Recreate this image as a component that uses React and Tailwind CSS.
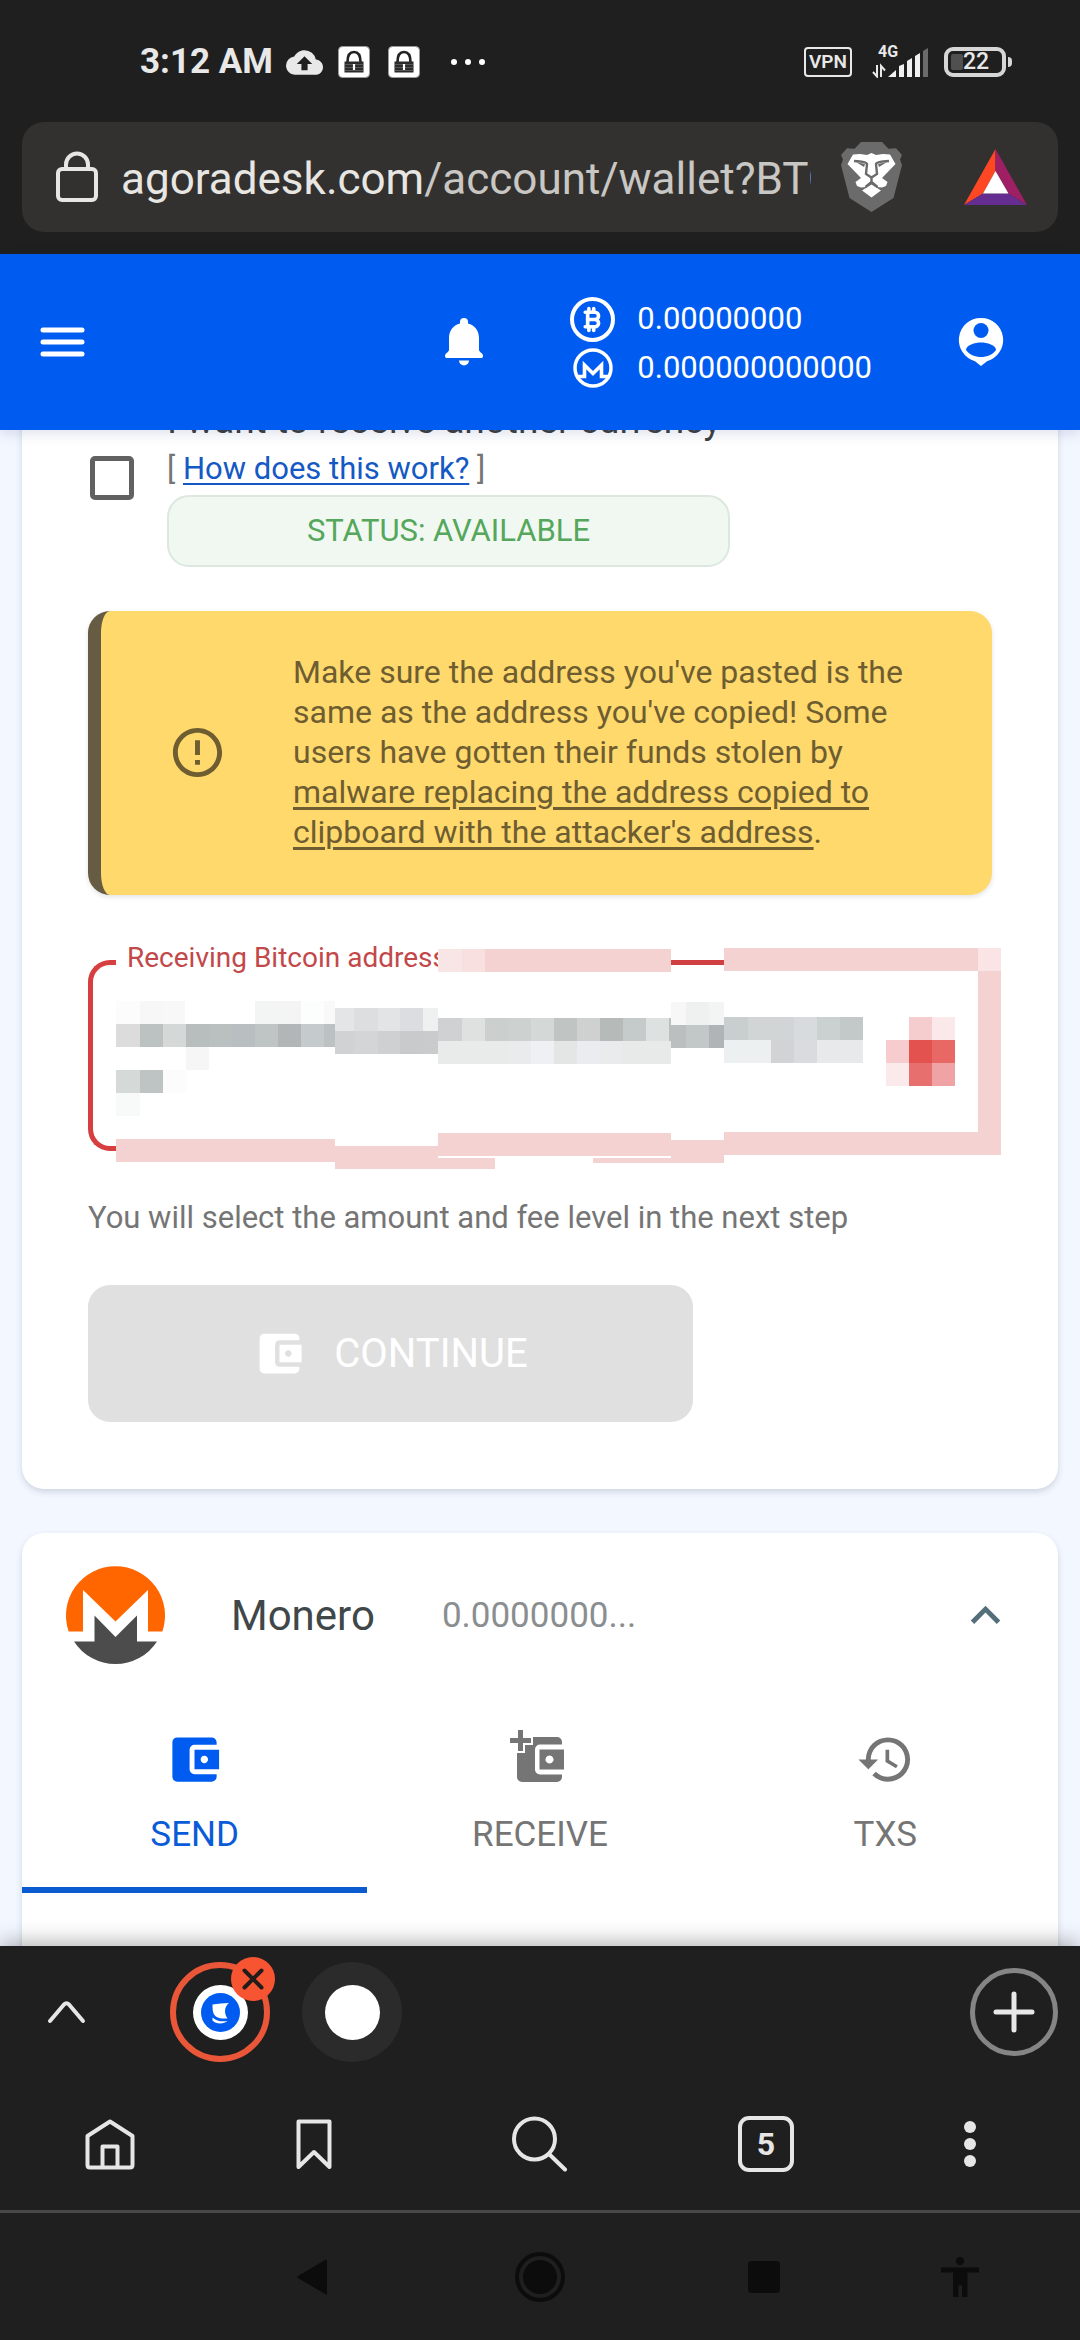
import React from "react";
import {
  MdAccountBalanceWallet,
  MdCloudUpload,
  MdErrorOutline,
  MdHistory,
  MdKeyboardArrowUp,
} from "react-icons/md";
import { TbCurrencyBitcoin } from "react-icons/tb";

const PINK = "#f3d2d1";

/* Censored field: rows of [y, x positions, colours, right edge], tiles are 23 high. */
const TILE_ROWS = [
  [53, [28, 52, 75], ["#fcfcfc", "#f7f7f8", "#f8f8f8"], 97],
  [53, [167, 190, 213, 236], ["#f3f4f4", "#f4f4f4", "#fcfdfd", "#f9f9f9"], 247],
  [76, [28, 52, 75, 98, 121, 144, 167, 190, 213, 236], ["#dcdcdd", "#bcc1c1", "#d4d9d8", "#b8bdbd", "#babfc0", "#b9bec0", "#bfc4c4", "#b3b6b6", "#c5cacc", "#bcc1c1"], 247],
  [99, [98], ["#f6f6f7"], 121],
  [122, [28, 52, 75], ["#d5dad9", "#bec3c3", "#fdfcfc"], 98],
  [145, [28], ["#f8f9f9"], 52],
  [60, [247, 266, 290, 312, 335], ["#e4e5e6", "#dddee0", "#e3e4e6", "#dcdde0", "#eff0f0"], 350],
  [83, [247, 266, 290, 312, 335], ["#d0d2d4", "#d4d5d7", "#cfd0d2", "#c8cacc", "#c9cbcd"], 350],
  [70, [350, 374, 397, 420, 443, 466, 489, 512, 535, 558, 581], ["#cfd1d2", "#dfe1e1", "#cbd0ce", "#cdd1d0", "#d4d9d8", "#c0c5c4", "#cfd1d1", "#b6bab9", "#c5cbcb", "#dde1e0", "#babfbf"], 583],
  [93, [350, 397, 420, 443, 466, 489, 512, 535], ["#e8ebea", "#e9ebea", "#e9ebec", "#eef1f3", "#e4e6e5", "#eaecef", "#e9ebed", "#e8eaea"], 583],
  [54, [583, 598, 621], ["#f7f7f8", "#eff1f1", "#f3f4f4"], 636],
  [77, [583, 598, 621], ["#bbbfc0", "#c2c7c8", "#b0b4b6"], 636],
  [69, [636, 660, 706, 729, 752], ["#c9cece", "#d1d5d6", "#d7dbdd", "#cbd0d0", "#c3c8c9"], 775],
  [92, [636, 683, 706, 729], ["#edf0f0", "#d1d3d4", "#dadbde", "#e7e9ea"], 775],
  [69, [821, 844], ["#f5cdcf", "#fbe8ea"], 867],
  [92, [798, 821, 844], ["#f6cccf", "#e4524f", "#e86865"], 867],
  [115, [798, 821, 844], ["#fbeaec", "#e76f6d", "#efa3a4"], 867],
];

/* [x, y, width, height, colour] */
const FRAME_BLOCKS = [
  [28, 191, 219, 23, PINK],
  [247, 198, 103, 23, PINK],
  [350, 210, 57, 11, PINK],
  [350, 185, 233, 23, PINK],
  [505, 210, 78, 5, PINK],
  [583, 192, 53, 23, PINK],
  [636, 184, 277, 23, PINK],
  [890, 23, 23, 184, PINK],
  [350, 1, 24, 23, "#f8e6e6"],
  [374, 1, 23, 23, "#f8dfe0"],
  [397, 1, 186, 23, PINK],
  [583, 12, 53, 5, "#d04040"],
  [636, 0, 254, 23, PINK],
  [890, 0, 23, 23, "#fae4e6"],
];

function Mosaic() {
  return (
    <svg aria-hidden="true" className="pointer-events-none absolute top-0 left-0 h-[222px] w-[913px]" viewBox="0 0 913 222" shapeRendering="crispEdges">
      {FRAME_BLOCKS.map(([x, y, w, h, c]) => (
        <rect key={`${x}-${y}`} x={x} y={y} width={w} height={h} fill={c} />
      ))}
      {TILE_ROWS.map(([y, xs, colours, end]) =>
        xs.map((x, i) => (
          <rect key={`${x}-${y}`} x={x} y={y} width={(xs[i + 1] ?? end) - x} height={23} fill={colours[i]} />
        ))
      )}
    </svg>
  );
}

function NoticeLock() {
  return (
    <svg className="size-8" viewBox="0 0 32 32">
      <rect x="0.5" y="0.5" width="31" height="31" rx="4" fill="#fff" stroke="#9a9a9a" />
      <path d="M9.500 16c0-6 2-10 6.500-10s6.500 4 6.500 10" fill="none" stroke="#222" strokeWidth="2.600" />
      <path d="M6.500 15.500h19v11h-19z" fill="#2b2b2b" />
      <path d="M6.500 18.500h19M6.500 21.500h19M6.500 24.500h19" stroke="#777" strokeWidth="0.600" />
      <path d="M16 18v6" stroke="#fff" strokeWidth="2.200" />
    </svg>
  );
}

function Signal() {
  return (
    <div className="flex h-8 w-14 flex-col">
      <span className="ml-[6px] w-7 text-[16px] leading-3 font-bold">4G</span>
      <svg className="-mt-3 h-8 w-14" viewBox="0 0 56 32">
        <path d="M5 19v11.500L1 26M9 31V20l4 4.500" fill="none" stroke="#e8e8e8" strokeWidth="2" />
        <path d="M16 31l8-7v7z" fill="#f0f0f0" />
        <path d="M27 31V20l5-2v13zM35 31V15l5-3v19zM43 31V10l5-3v24z" fill="#f0f0f0" />
        <path d="M51 31V5l5-3v29z" fill="#6b6b6b" />
      </svg>
    </div>
  );
}

function Battery() {
  return (
    <div className="flex items-center gap-[2px]">
      <div className="flex h-[30px] w-[62px] items-center rounded-[9px] border-4 border-[#d6d6d6] pl-[3px]">
        <span className="h-4 w-3 shrink-0 rounded-xs bg-[#505050]" />
        <span className="text-[23px] leading-6 font-medium">22</span>
      </div>
      <span className="h-[10px] w-1 rounded-r-sm bg-[#d6d6d6]" />
    </div>
  );
}

function StatusBar() {
  return (
    <div className="flex h-[122px] items-start pt-[46px] pr-[68px] pl-[140px] text-[#e8e8e8]">
      <div className="flex h-8 items-center">
        <span className="text-[35px] leading-8 font-bold">3:12 AM</span>
        <MdCloudUpload className="ml-[13px] size-[37px]" />
        <div className="ml-[15px] flex gap-[18px]">
          <NoticeLock />
          <NoticeLock />
        </div>
        <div className="ml-[31px] flex gap-2">
          <span className="size-[6px] rounded-full bg-white" />
          <span className="size-[6px] rounded-full bg-white" />
          <span className="size-[6px] rounded-full bg-white" />
        </div>
      </div>
      <div className="ml-auto flex h-8 items-center">
        <span className="flex h-[30px] w-12 items-center justify-center rounded-[4px] border-2 border-[#e8e8e8] text-[19px] leading-5 font-semibold">VPN</span>
        <div className="ml-5">
          <Signal />
        </div>
        <div className="ml-4">
          <Battery />
        </div>
      </div>
    </div>
  );
}

function AddressBar() {
  return (
    <div className="mx-[22px] mb-[22px] flex h-[110px] items-center rounded-[22px] bg-[#33312f] pr-[31px] pl-[33px]">
      <svg className="h-[52px] w-[44px] shrink-0" viewBox="0 0 44 52" fill="none" stroke="#e8e6e3" strokeWidth="4">
        <rect x="3" y="18" width="38" height="31" rx="4" />
        <path d="M11 18v-4.500a11 11 0 0 1 22 0V18" />
      </svg>
      <div className="ml-[22px] min-w-0 flex-1 overflow-hidden pt-1 text-[44px] leading-[54px] whitespace-nowrap text-[#c9c7c4]">
        <span className="text-[#e8e6e3]">agoradesk.com</span>/account/wallet?BTC
      </div>
      <button aria-label="Shields" className="ml-[30px] shrink-0">
        <svg className="h-[70px] w-[61px]" viewBox="0 0 61 70">
          <path d="M20 0h21l6.500 6.700 7.500-.5 6 6.800-2 4.500 2 5.500-8.500 33L30.500 70 8.500 56 0 23l2-5.500L0 13l6-6.800 7.500.5z" fill="#6b6b6b" />
          <path d="M12 12.500l7-.5 7 1 4.500-2 4.500 2 7-1 7 .5 5.500 9.500L41 36l5.500 4-1.500 4-4 1.500-5-.5-5.500-6-5.500 6-5 .5-4-1.500-1.500-4L20 36 6.500 22z" fill="#fff" />
          <path d="M30.500 42.500l9.500 6-9.500 7-9.500-7z" fill="#fff" />
          <path d="M13 19c5 .5 12 0 13 3l-1 10 5.500 3.500L36 32l-1-10c1-3 8-2.500 13-3M30.500 35.500V40l-6 5M30.500 40l6 5" fill="none" stroke="#6b6b6b" strokeWidth="2.400" />
          <path d="M15 20l9 2-1 3zM46 20l-9 2 1 3z" fill="#6b6b6b" />
        </svg>
      </button>
      <button aria-label="Rewards" className="ml-[62px] shrink-0">
        <svg className="h-[56px] w-[63px]" viewBox="0 0 63 56">
          <path d="M31.500 0L0 56l19-11.500L31.500 22z" fill="#ff4724" />
          <path d="M31.500 0L63 56 44.500 44.500 31.500 22z" fill="#9e1f63" />
          <path d="M0 56h63L44.500 44.500H19z" fill="#662d91" />
          <path d="M31.500 22L19 44.500h25.500z" fill="#fff" />
        </svg>
      </button>
    </div>
  );
}

function AppHeader() {
  return (
    <header className="relative z-10 flex h-44 shrink-0 items-center bg-[#005cf0] pr-[76px] pl-10 text-white shadow-[0_4px_12px_rgba(30,60,120,0.14)]">
      <button aria-label="Menu">
        <svg className="h-[30px] w-[45px]" viewBox="0 0 45 30" stroke="#fff" strokeWidth="5" strokeLinecap="round">
          <path d="M3 3h39M3 15h39M3 27h39" />
        </svg>
      </button>
      <button aria-label="Notifications" className="ml-auto">
        <svg className="h-12 w-[38px]" viewBox="0 0 38 48" fill="#fff">
          <path d="M19 0a4 4 0 0 0-4 4v1.500C8 7 4 13 4 20v12c0 2-4 3-4 6 0 1.500 1 2 2 2h34c1 0 2-.5 2-2 0-3-4-4-4-6V20c0-7-4-13-11-14.500V4a4 4 0 0 0-4-4zM14 42.500h10a5 5 0 0 1-10 0z" />
        </svg>
      </button>
      <div className="ml-[87px] text-[31px]">
        <div className="flex items-center gap-[22px]">
          <span className="flex size-[45px] items-center justify-center rounded-full border-4 border-white">
            <TbCurrencyBitcoin className="size-[29px]" strokeWidth={3} />
          </span>
          <span className="leading-[44px]">0.00000000</span>
        </div>
        <div className="mt-[6px] flex items-center gap-[22px]">
          <span className="flex w-[45px] justify-center">
            <svg className="size-10" viewBox="0 0 40 40" fill="none" stroke="#fff">
              <circle cx="20" cy="20" r="18" strokeWidth="3.500" />
              <path d="M3 28.500h8.500V17L20 25.500 28.500 17v11.500H37" strokeWidth="3.600" />
            </svg>
          </span>
          <span className="leading-10">0.000000000000</span>
        </div>
      </div>
      <button aria-label="Account" className="ml-[86px]">
        <svg className="h-12 w-[46px]" viewBox="0 0 46 48">
          <path d="M23 0a22 22 0 0 1 6 43.200L23 48l-6-4.800A22 22 0 0 1 23 0z" fill="#fff" />
          <circle cx="23" cy="12.500" r="7.500" fill="#005cf0" />
          <path d="M8 32c0-5 9-7.500 15-7.500S38 27 38 32c-3 4.500-9 7-15 7S11 36.500 8 32z" fill="#005cf0" />
        </svg>
      </button>
    </header>
  );
}

function BitcoinCard() {
  return (
    <section className="-mt-9 rounded-b-[22px] bg-white px-[66px] pb-[67px] shadow-[0_3px_6px_rgba(60,80,110,0.2)]">
      <div className="flex">
        <input id="convert" type="checkbox" className="mt-[62px] ml-[2px] size-11 shrink-0 appearance-none rounded-[5px] border-5 border-[#616161]" />
        <div className="ml-[33px]">
          <label htmlFor="convert" className="block text-[37px] leading-[54px] text-[#3c3f41]">
            I want to receive another currency
          </label>
          <div className="pt-[2px] text-[31px] leading-[38px] text-[#757575]">
            [{" "}
            <a href="#how" className="text-[#1459c4] underline decoration-2 underline-offset-4">
              How does this work?
            </a>{" "}
            ]
          </div>
          <div className="mt-[7px] flex h-[72px] w-[563px] items-center justify-center rounded-[22px] border-2 border-[#dce8de] bg-[#f1f8f1] text-[31px] leading-[38px] text-[#54a75b]">
            STATUS: AVAILABLE
          </div>
        </div>
      </div>

      <div role="alert" className="mt-11 flex items-center rounded-[22px] border-l-[13px] border-[#665b43] bg-[#ffd96c] pt-[41px] pb-[43px] pr-[60px] pl-[67px] text-[32px] leading-10 text-[#6e5d31] shadow-[0_2px_5px_rgba(60,60,60,0.14)]">
        <MdErrorOutline className="size-[59px] shrink-0" />
        <p className="ml-[66px]">
          Make sure the address you've pasted is the same as the address you've copied! Some users have gotten their funds stolen by{" "}
          <a href="#malware" className="underline decoration-3 underline-offset-4">
            malware replacing the address copied to clipboard with the attacker's address
          </a>
          .
        </p>
      </div>

      <div className="relative mt-[53px] h-[203px]">
        <div className="absolute top-3 left-0 h-[191px] w-7 rounded-l-[22px] border-5 border-r-0 border-[#d63e3f]" />
        <textarea id="address" className="block h-full w-full resize-none bg-transparent px-10 py-12 text-[31px] outline-none" />
        <label htmlFor="address" className="absolute -top-2 left-[39px] bg-white text-[28px] leading-9 text-[#c2484a]">
          Receiving Bitcoin address
        </label>
        <Mosaic />
      </div>
      <p className="mt-[47px] text-[31px] leading-10 text-[#757575]">You will select the amount and fee level in the next step</p>
      <button className="mt-[47px] flex h-[137px] w-[605px] items-center justify-center gap-7 rounded-[22px] bg-[#e0e0e0] text-[40px] text-white">
        <MdAccountBalanceWallet className="size-[53px]" />
        CONTINUE
      </button>
    </section>
  );
}

function Tab({ label, active, children }) {
  return (
    <button
      role="tab"
      aria-selected={active}
      className={`flex flex-col items-center gap-6 border-b-6 pt-8 pb-[30px] text-[35px] leading-[44px] ${
        active ? "border-[#0a5bd0] text-[#0a5bd8]" : "border-transparent text-[#757575]"
      }`}
    >
      {children}
      {label}
    </button>
  );
}

function MoneroCard() {
  return (
    <section className="mt-11 h-[500px] rounded-[22px] bg-white shadow-[0_3px_6px_rgba(60,80,110,0.2)]">
      <div className="flex h-[165px] items-center pr-[43px] pl-11">
        <svg className="size-[99px]" viewBox="0 0 99 99">
          <path d="M2.600 65.500A49.500 49.500 0 1 1 96.400 65.500H82V24L49.500 55.500 17 24v41.500z" fill="#ff6600" />
          <path d="M8 75.500h20.500V49.500l21 21.500L71 49.500v26h20a49.500 49.500 0 0 1-83 0z" fill="#4c4c4c" />
        </svg>
        <h2 className="ml-[66px] text-[42px] leading-[50px] text-[#3f4749]">Monero</h2>
        <span className="ml-[67px] text-[35px] leading-10 text-[#8b8e90]">0.0000000...</span>
        <button aria-label="Collapse" className="ml-auto">
          <MdKeyboardArrowUp className="size-[59px] text-[#546e7a]" />
        </button>
      </div>
      <div role="tablist" className="grid grid-cols-3">
        <Tab label="SEND" active>
          <MdAccountBalanceWallet className="size-[59px] text-[#005cf0]" />
        </Tab>
        <Tab label="RECEIVE" active={false}>
          <svg className="size-[59px]" viewBox="0 0 59 59" fill="currentColor">
            <path d="M8 0h5v8h8v5h-8v8H8v-8H0V8h8z" />
            <path d="M23 7h24a5 5 0 0 1 5 5v2.500H30a5 5 0 0 0-5 5v20a5 5 0 0 0 5 5h22V47a5 5 0 0 1-5 5H12a5 5 0 0 1-5-5V23h8v-8h8z" />
            <path fillRule="evenodd" d="M29.500 19.500H54v20H29.500zM39.500 25.500a4 4 0 1 0 .01 0z" />
          </svg>
        </Tab>
        <Tab label="TXS" active={false}>
          <MdHistory className="size-[59px]" />
        </Tab>
      </div>
    </section>
  );
}

function TabStrip() {
  return (
    <div className="flex items-center pt-4 pr-[22px] pl-[47px]">
      <button aria-label="Expand">
        <svg className="h-6 w-[39px]" viewBox="0 0 39 24" fill="none" stroke="#e6e6e6" strokeWidth="4" strokeLinecap="round" strokeLinejoin="round">
          <path d="M3 21L17 4.500q2.500-2.500 5 0L36 21" />
        </svg>
      </button>
      <div className="relative ml-[84px] flex size-[100px] items-center justify-center rounded-full border-6 border-[#ea5738]">
        <span className="flex size-[55px] items-center justify-center rounded-full bg-white">
          <svg className="size-[39px]" viewBox="0 0 39 39">
            <circle cx="19.500" cy="19.500" r="19.500" fill="#005cf0" />
            <path d="M11.500 11.500q8-1.500 16.500-1.500c-5 4-5 10.500-1.500 15.500-6 .5-11-.5-13.500-4-1.500-3-1.500-6.500-1.500-10z" fill="#fff" />
            <path d="M11.500 24.500c4 3.500 9 4.500 15 3.500-4 3.500-12 3-15-.5z" fill="#fff" />
          </svg>
        </span>
        <button aria-label="Close tab" className="absolute -top-[11px] -right-[11px] flex size-11 items-center justify-center rounded-full bg-[#f75432]">
          <svg className="size-6" viewBox="0 0 24 24" stroke="#221c1a" strokeWidth="4" strokeLinecap="round">
            <path d="M3.500 3.500l17 17M20.500 3.500l-17 17" />
          </svg>
        </button>
      </div>
      <button aria-label="New tab page" className="ml-8 flex size-[100px] items-center justify-center rounded-full bg-[#2b2b2b]">
        <span className="size-[55px] rounded-full bg-white" />
      </button>
      <button aria-label="Add tab" className="ml-auto flex size-[88px] items-center justify-center rounded-full border-5 border-[#858585]">
        <svg className="size-[42px]" viewBox="0 0 42 42" stroke="#e8e8e8" strokeWidth="5" strokeLinecap="round">
          <path d="M21 3v36M3 21h36" />
        </svg>
      </button>
    </div>
  );
}

function BrowserNav() {
  return (
    <nav className="mt-[54px] grid grid-cols-[220fr_188fr_264fr_188fr_220fr] place-items-center pb-[38px] text-[#e6e6e6]">
      <button aria-label="Home">
        <svg className="h-[52px] w-[50px]" viewBox="0 0 50 52" fill="none" stroke="currentColor" strokeWidth="4" strokeLinejoin="round">
          <path d="M2.500 18L25 3.500 47.500 18v29q0 2.500-2.500 2.500H5q-2.500 0-2.500-2.500zM17.500 49V28.500h15V49" />
        </svg>
      </button>
      <button aria-label="Bookmarks">
        <svg className="h-[52px] w-9" viewBox="0 0 36 52" fill="none" stroke="currentColor" strokeWidth="4" strokeLinejoin="round">
          <path d="M2.500 3.500h31V49L18 34 2.500 49z" />
        </svg>
      </button>
      <button aria-label="Search">
        <svg className="size-14" viewBox="0 0 56 56" fill="none" stroke="currentColor" strokeWidth="4" strokeLinecap="round">
          <circle cx="22.500" cy="23" r="20.500" />
          <path d="M37.500 38.500L53 53.500" />
        </svg>
      </button>
      <button aria-label="Tabs" className="flex size-14 items-center justify-center rounded-[11px] border-4 border-[#e6e6e6] text-[32px] leading-9 font-bold">
        5
      </button>
      <button aria-label="More" className="flex flex-col gap-[5px]">
        <span className="size-3 rounded-full bg-[#e6e6e6]" />
        <span className="size-3 rounded-full bg-[#e6e6e6]" />
        <span className="size-3 rounded-full bg-[#e6e6e6]" />
      </button>
    </nav>
  );
}

function SystemNav() {
  return (
    <nav className="grid h-[130px] grid-cols-[200fr_224fr_232fr_216fr_176fr_32fr] place-items-center border-t-3 border-[#484848] text-[#0c0c0c]">
      <button aria-label="Back" className="col-start-2">
        <svg className="h-9 w-8" viewBox="0 0 32 36" fill="currentColor" stroke="currentColor" strokeWidth="2" strokeLinejoin="round">
          <path d="M30 1.500v33L2 18z" />
        </svg>
      </button>
      <button aria-label="Home screen">
        <svg className="size-[50px]" viewBox="0 0 50 50" fill="currentColor">
          <circle cx="25" cy="25" r="23" fill="none" stroke="currentColor" strokeWidth="4" />
          <circle cx="25" cy="25" r="17" />
        </svg>
      </button>
      <button aria-label="Recents" className="size-8 rounded-sm bg-[#0c0c0c]" />
      <button aria-label="Accessibility">
        <svg className="h-10 w-[38px]" viewBox="0 0 38 40" fill="currentColor">
          <circle cx="19" cy="4" r="4" />
          <path d="M0 10.500h38v5H26.500V40H21V28.500h-3.500V40H12V15.500H0z" />
        </svg>
      </button>
    </nav>
  );
}

export default function App() {
  return (
    <div className="flex h-screen flex-col overflow-hidden bg-[#f3f7ff] font-[Roboto,sans-serif]">
      <div className="shrink-0 bg-[#1f1f1f]">
        <StatusBar />
        <AddressBar />
      </div>
      <AppHeader />
      <main className="min-h-0 flex-1 overflow-hidden px-[22px]">
        <BitcoinCard />
        <MoneroCard />
      </main>
      <footer className="relative z-10 shrink-0 bg-[#1f1f1f] shadow-[0_-4px_20px_rgba(0,0,0,0.3)]">
        <TabStrip />
        <BrowserNav />
        <SystemNav />
      </footer>
    </div>
  );
}
